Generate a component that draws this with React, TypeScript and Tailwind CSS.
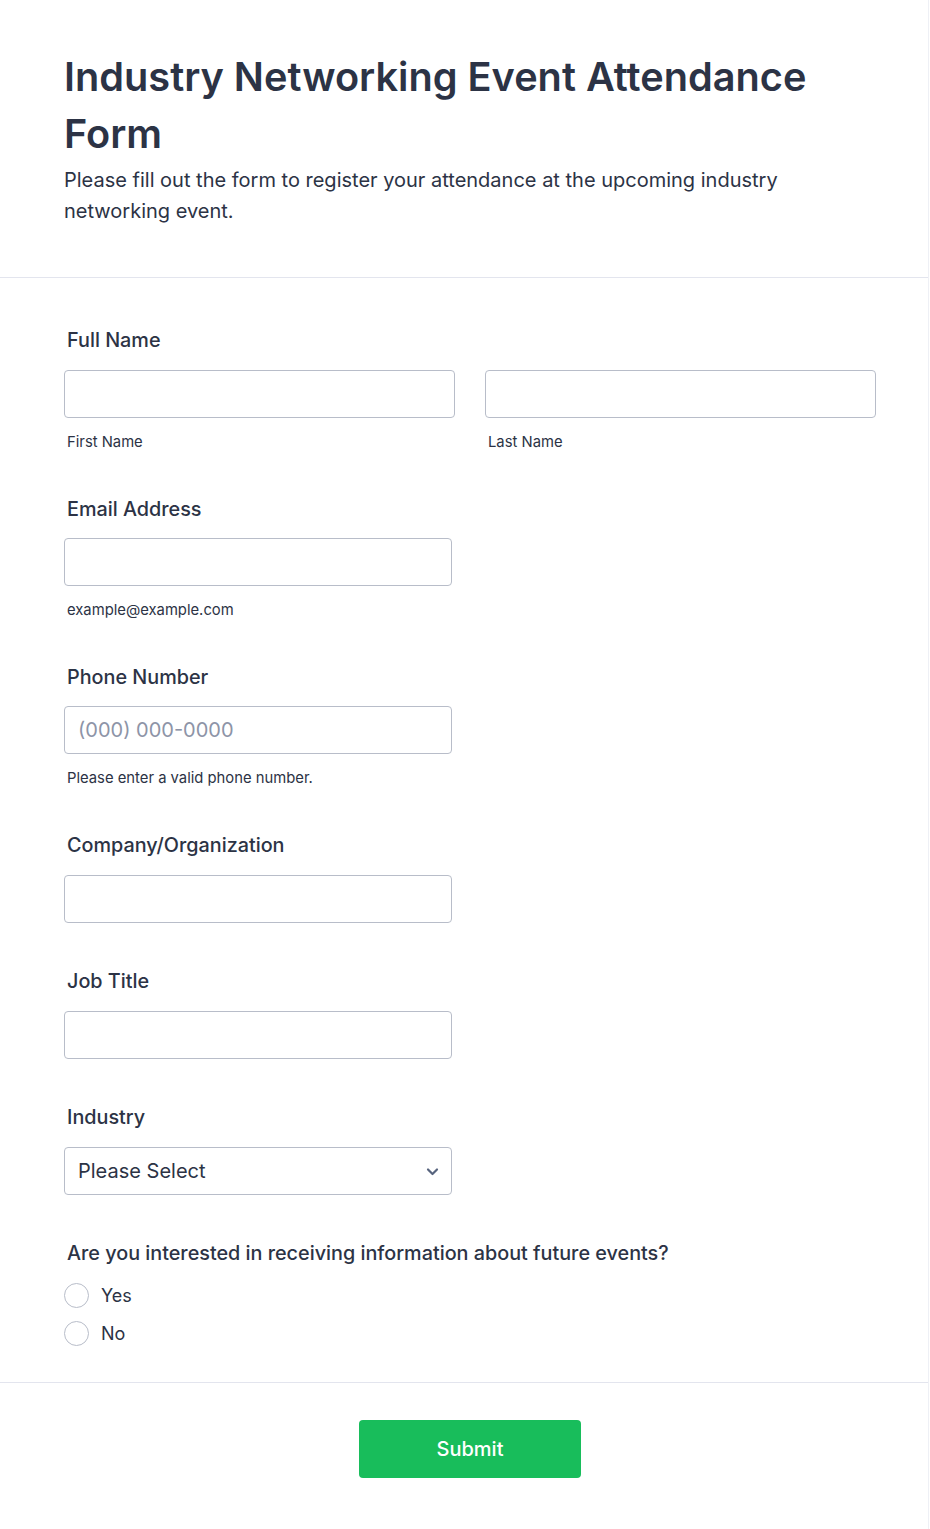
import React, { FC } from "react";

const inputCls =
  "h-12 rounded-[4px] border border-[#b8bdc9] bg-white px-[13px] text-[20px] text-[#2c3345] placeholder:text-[#8d94a7] outline-none";

const Label: FC<{ children: React.ReactNode }> = ({ children }) => (
  <label className="block pl-[3px] text-[19.8px] leading-7 font-medium text-[#2c3345]">{children}</label>
);

const SubLabel: FC<{ children: React.ReactNode }> = ({ children }) => (
  <span className="mt-[14px] block pl-[3px] text-[14.8px] leading-[21px] text-[#2c3345]">{children}</span>
);

const App: FC = () => {
  return (
    <div className="min-h-screen bg-white" style={{ fontFamily: "Inter, 'Noto Sans', sans-serif" }}>
      <div className="w-[929px] border-r border-[#eef0f5] bg-white">
        {/* header */}
        <div className="border-b border-[#e3e5ee] pt-[49px] pr-[100px] pb-[50px] pl-16">
          <h1 className="text-[39.7px] leading-[57px] font-semibold text-[#2c3345]">
            Industry Networking Event Attendance Form
          </h1>
          <p className="mt-[2px] text-[20px] leading-[31px] text-[#2c3345]">
            Please fill out the form to register your attendance at the upcoming industry networking event.
          </p>
        </div>

        {/* fields */}
        <div className="border-b border-[#e3e5ee] pt-12 pb-[35px] pl-16">
          <div className="pb-[42px]">
            <Label>Full Name</Label>
            <div className="mt-4 flex gap-[30px]">
              <div className="flex w-[391px] flex-col">
                <input className={inputCls} />
                <SubLabel>First Name</SubLabel>
              </div>
              <div className="flex w-[391px] flex-col">
                <input className={inputCls} />
                <SubLabel>Last Name</SubLabel>
              </div>
            </div>
          </div>

          <div className="flex w-[388px] flex-col pb-[42px]">
            <Label>Email Address</Label>
            <input className={`${inputCls} mt-[15px]`} />
            <SubLabel>example@example.com</SubLabel>
          </div>

          <div className="flex w-[388px] flex-col pb-[42px]">
            <Label>Phone Number</Label>
            <input className={`${inputCls} mt-[15px] text-[18.5px]`} placeholder="(000) 000-0000" />
            <SubLabel>Please enter a valid phone number.</SubLabel>
          </div>

          <div className="flex w-[388px] flex-col pb-11">
            <Label>Company/Organization</Label>
            <input className={`${inputCls} mt-4`} />
          </div>

          <div className="flex w-[388px] flex-col pb-11">
            <Label>Job Title</Label>
            <input className={`${inputCls} mt-4`} />
          </div>

          <div className="flex w-[388px] flex-col pb-11">
            <Label>Industry</Label>
            <div className={`${inputCls} mt-4 flex items-center justify-between pr-[12px]`}>
              <span>Please Select</span>
              <svg width="13" height="9" viewBox="0 0 13 9" fill="none">
                <path d="M2 2.5l4.5 4.5L11 2.5" stroke="#57647e" strokeWidth="2.2" strokeLinecap="round" strokeLinejoin="round" />
              </svg>
            </div>
          </div>

          <div>
            <Label>Are you interested in receiving information about future events?</Label>
            <div className="mt-[14px] flex flex-col gap-[10px]">
              {["Yes", "No"].map((o) => (
                <label key={o} className="flex h-7 items-center gap-3">
                  <span className="h-[25px] w-[25px] rounded-full border border-[#b8bdc9] bg-white" />
                  <span className="text-[18px] text-[#2c3345]">{o}</span>
                </label>
              ))}
            </div>
          </div>
        </div>

        {/* submit */}
        <div className="flex justify-center pt-[37px] pb-[51px] pl-[12px]">
          <button className="h-[58px] w-[222px] rounded-[4px] bg-[#18bd5b] text-[20px] font-medium text-white">
            Submit
          </button>
        </div>
      </div>
    </div>
  );
};

export default App;
